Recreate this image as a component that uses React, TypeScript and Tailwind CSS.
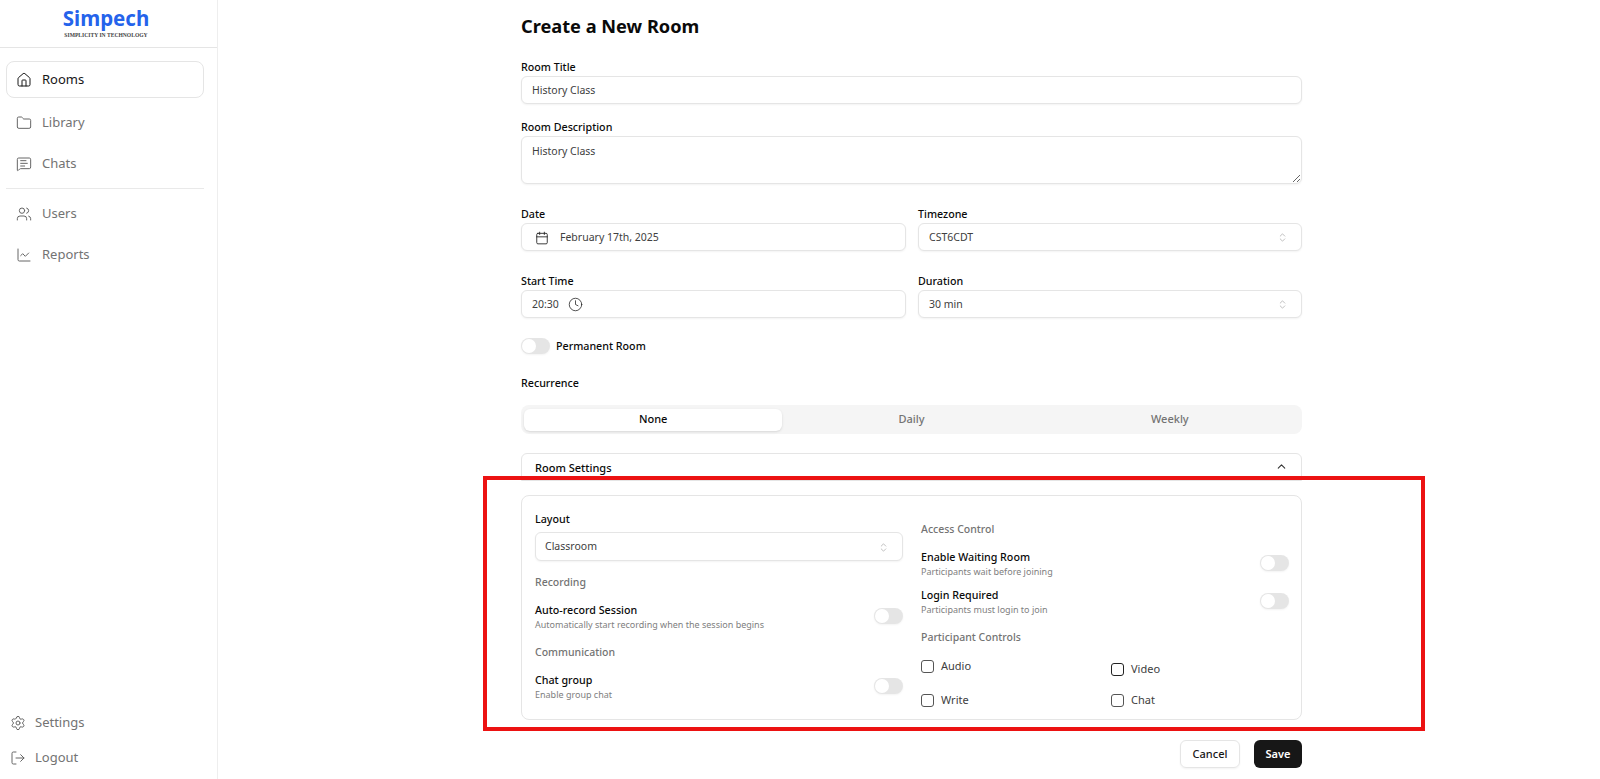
import React from "react";
import { ChartLine, ChevronUp, ChevronsUpDown, Calendar, Clock, Folder, House, LogOut, MessageSquareText, Settings, Users } from "lucide-react";

const Label = ({ children, className = "" }: { children: React.ReactNode; className?: string }) => (
  <div className={`text-[10.7px] leading-[16px] font-medium text-[#0a0a0a] ${className}`}>{children}</div>
);

const Field = ({ children, className = "" }: { children: React.ReactNode; className?: string }) => (
  <div className={`flex items-center rounded-md border border-[#e5e5e5] bg-white pt-[1px] shadow-xs text-[10.5px] text-[#404040] ${className}`}>
    {children}
  </div>
);

const Select = ({ value, className = "" }: { value: string; className?: string }) => (
  <Field className={`justify-between pl-[10px] pr-[13px] ${className}`}>
    <span>{value}</span>
    <ChevronsUpDown size={11} className="text-[#a3a3a3]" strokeWidth={1.5} />
  </Field>
);

const Toggle = ({ className = "" }: { className?: string }) => (
  <div className={`flex h-[16px] w-[29px] shrink-0 items-center rounded-full bg-[#e5e5e5] pl-[1px] shadow-xs ${className}`}>
    <div className="h-[14px] w-[14px] rounded-full bg-white" />
  </div>
);

const SectionTitle = ({ children, className = "" }: { children: React.ReactNode; className?: string }) => (
  <div className={`text-[10.5px] leading-[16px] font-medium text-[#737373] ${className}`}>{children}</div>
);

const SwitchRow = ({ title, hint, className = "" }: { title: string; hint: string; className?: string }) => (
  <div className={`flex items-center justify-between ${className}`}>
    <div>
      <Label>{title}</Label>
      <div className="text-[9px] leading-[14px] text-[#808080]">{hint}</div>
    </div>
    <Toggle className="-translate-y-[1px]" />
  </div>
);

const Check = ({ label, className = "", dark = false }: { label: string; className?: string; dark?: boolean }) => (
  <div className={`flex items-center gap-[7px] text-[11px] leading-[16px] text-[#404040] ${className}`}>
    <div className={`h-[13px] w-[13px] rounded-[3px] border ${dark ? "border-[#222]" : "border-[#555]"}`} />
    {label}
  </div>
);

const NavItem = ({ icon: Icon, label, active = false, className = "" }: { icon: typeof House; label: string; active?: boolean; className?: string }) => (
  <div className={`flex items-center gap-[10px] rounded-lg border pl-[9px] text-[13px] ${active ? "border-[#e5e5e5] text-[#171717]" : "border-transparent text-[#737373]"} ${className}`}>
    <Icon size={16} strokeWidth={1.5} className={active ? "text-[#171717]" : "text-[#666]"} />
    {label}
  </div>
);

export default function App() {
  return (
    <div className="relative flex h-[779px] w-[1600px] overflow-hidden bg-white font-['Noto_Sans',sans-serif]">
      <aside className="flex h-full w-[218px] shrink-0 flex-col border-r border-[#eeeeee]">
        <div className="flex h-[48px] shrink-0 flex-col items-center border-b border-[#e5e5e5] pr-[5px] pt-[5px]">
          <div className="text-[20.5px] leading-[26px] font-bold text-[#2563eb]">Simpech</div>
          <div className="mt-[1px] text-[5.6px] leading-[7px] font-bold text-[#444] font-['Liberation_Serif',serif]">SIMPLICITY IN TECHNOLOGY</div>
        </div>
        <nav className="flex flex-1 flex-col pl-[6px] pr-[13px] pt-[13px]">
          <NavItem icon={House} label="Rooms" active className="h-[37px] pt-[1px]" />
          <NavItem icon={Folder} label="Library" className="mt-[5px] h-[40px]" />
          <NavItem icon={MessageSquareText} label="Chats" className="mt-[1px] h-[40px]" />
          <div className="mt-[4px] h-px bg-[#e9e9e9]" />
          <NavItem icon={Users} label="Users" className="mt-[5px] h-[40px]" />
          <NavItem icon={ChartLine} label="Reports" className="mt-[1px] h-[40px]" />
          <div className="mt-auto pb-[4px]">
            <NavItem icon={Settings} label="Settings" className="h-[35px] -ml-[6px] !gap-[9px]" />
            <NavItem icon={LogOut} label="Logout" className="h-[35px] -ml-[6px] !gap-[9px]" />
          </div>
        </nav>
      </aside>

      <main className="ml-[303px] w-[781px] shrink-0">
        <h1 className="mt-[12px] text-[18.2px] leading-[28px] font-bold text-[#0a0a0a]">Create a New Room</h1>
        <Label className="mt-[19px]">Room Title</Label>
        <Field className="mt-[1px] h-[28px] pl-[10px]">History Class</Field>
        <Label className="mt-[15px]">Room Description</Label>
        <textarea
          readOnly
          defaultValue="History Class"
          className="mt-[1px] block h-[48px] w-full resize-y rounded-md border border-[#e5e5e5] bg-white pl-[10px] pt-[7px] text-[10.5px] text-[#404040] shadow-xs outline-none"
        />

        <div className="mt-[22px] grid grid-cols-[385px_1fr] gap-x-[12px] gap-y-[22px]">
          <div>
            <Label>Date</Label>
            <Field className="mt-[1px] h-[28px] pl-[13px]">
              <Calendar size={14} strokeWidth={1.5} className="mr-[11px] text-[#222]" />
              February 17th, 2025
            </Field>
          </div>
          <div>
            <Label>Timezone</Label>
            <Select value="CST6CDT" className="mt-[1px] h-[28px]" />
          </div>
          <div>
            <Label>Start Time</Label>
            <Field className="mt-[1px] h-[28px] pl-[10px]">
              20:30
              <Clock size={15} strokeWidth={1.25} className="ml-[9px] text-[#222]" />
            </Field>
          </div>
          <div>
            <Label>Duration</Label>
            <Select value="30 min" className="mt-[1px] h-[28px]" />
          </div>
        </div>

        <div className="mt-[20px] flex items-center gap-[6px]">
          <Toggle />
          <Label>Permanent Room</Label>
        </div>
        <Label className="mt-[21px]">Recurrence</Label>
        <div className="mt-[14px] grid h-[29px] grid-cols-3 items-center rounded-lg bg-[#f5f5f5] px-[3px] text-center text-[11px] font-medium text-[#737373]">
          <div className="flex h-[22px] items-center justify-center rounded-md bg-white text-[#0a0a0a] shadow-sm">None</div>
          <div>Daily</div>
          <div>Weekly</div>
        </div>
        <div className="mt-[19px] flex h-[28px] items-start justify-between rounded-t-md border border-[#e5e5e5] pl-[13px] pr-[13px] pt-[6px] text-[11px] font-medium text-[#0a0a0a]">
          Room Settings
          <ChevronUp size={13} className="text-[#333]" />
        </div>

        <div className="mt-[14px] grid h-[225px] grid-cols-[368px_1fr] gap-x-[18px] rounded-lg border border-[#e5e5e5] pl-[13px] pr-[12px]">
          <div className="pt-[15px]">
            <Label>Layout</Label>
            <Select value="Classroom" className="mt-[5px] h-[29px] !pl-[9px]" />
            <SectionTitle className="mt-[13px]">Recording</SectionTitle>
            <SwitchRow className="mt-[12px]" title="Auto-record Session" hint="Automatically start recording when the session begins" />
            <SectionTitle className="mt-[12px]">Communication</SectionTitle>
            <SwitchRow className="mt-[12px]" title="Chat group" hint="Enable group chat" />
          </div>
          <div className="pt-[25px]">
            <SectionTitle>Access Control</SectionTitle>
            <SwitchRow className="mt-[12px]" title="Enable Waiting Room" hint="Participants wait before joining" />
            <SwitchRow className="mt-[8px]" title="Login Required" hint="Participants must login to join" />
            <SectionTitle className="mt-[12px]">Participant Controls</SectionTitle>
            <div className="mt-[10px] grid grid-cols-2 gap-x-[12px]">
              <Check label="Audio" />
              <Check label="Video" dark className="mt-[6px]" />
              <Check label="Write" className="mt-[15px]" />
              <Check label="Chat" className="mt-[15px]" />
            </div>
          </div>
        </div>

        <div className="mt-[20px] flex justify-end gap-[14px]">
          <div className="flex h-[28px] w-[60px] items-center justify-center rounded-md border border-[#e5e5e5] text-[11px] font-medium text-[#171717] shadow-xs">Cancel</div>
          <div className="flex h-[28px] w-[48px] items-center justify-center rounded-md bg-[#171717] text-[11px] font-semibold text-white">Save</div>
        </div>
      </main>

      <div className="pointer-events-none absolute left-[483px] top-[476px] h-[255px] w-[942px] border-[4px] border-[#ec1212]" />
    </div>
  );
}
